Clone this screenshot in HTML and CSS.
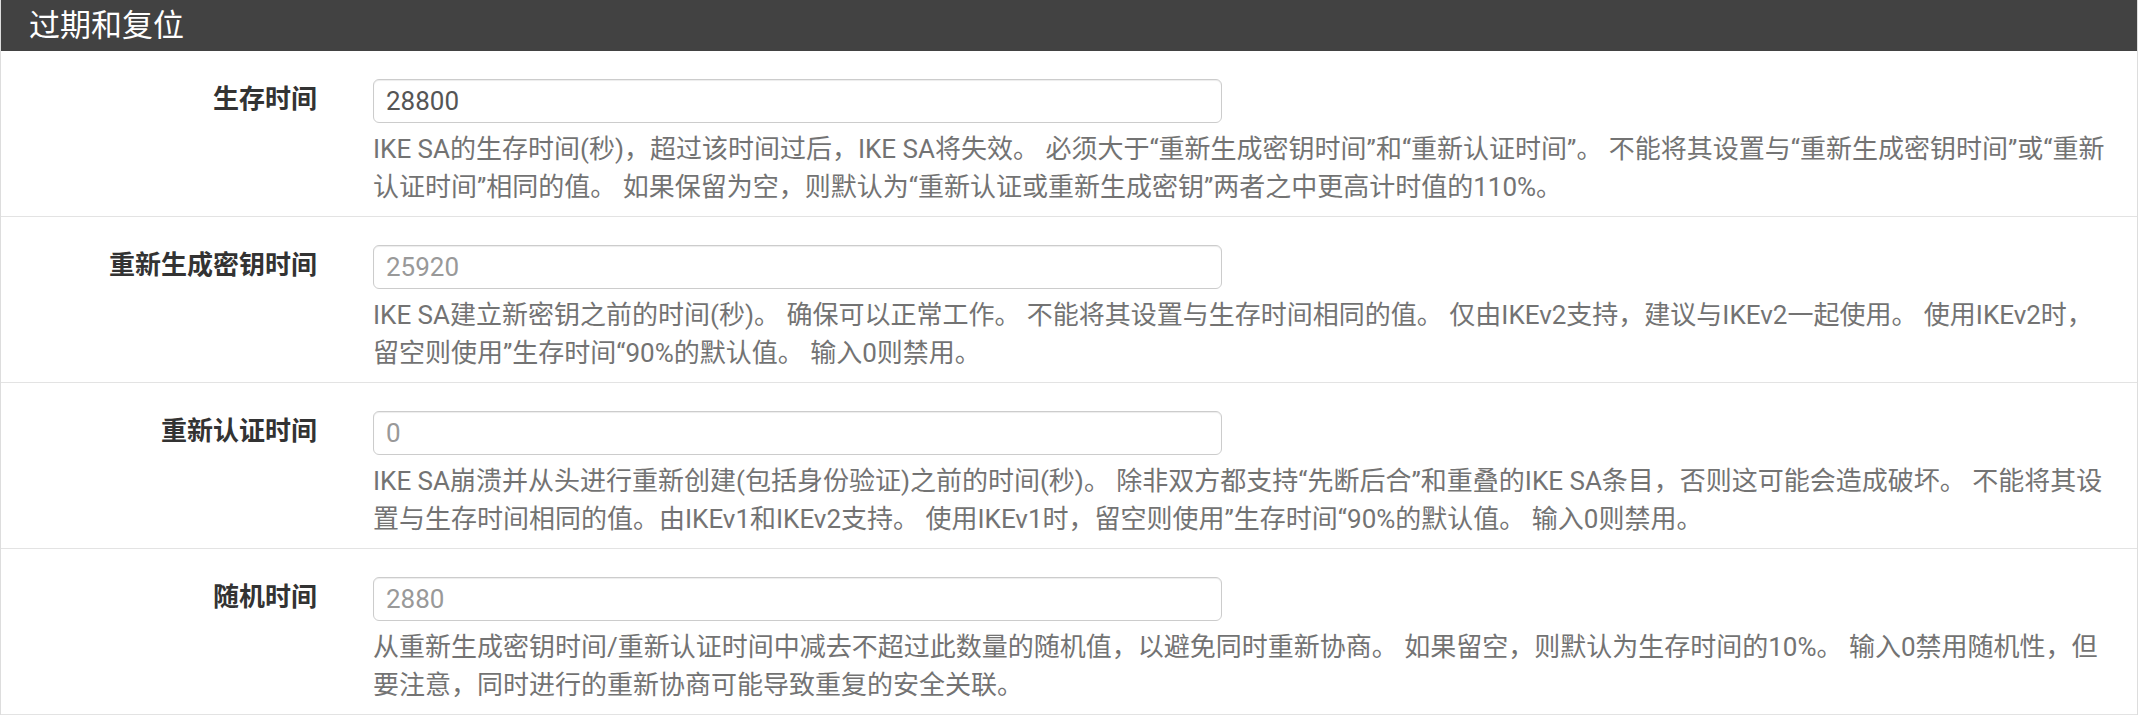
FILE: index.html
```html
<!DOCTYPE html>
<html lang="zh-CN">
<head>
<meta charset="utf-8">
<title>过期和复位</title>
<link rel="stylesheet" href="styles.css">
</head>
<body>
<div class="panel">
  <div class="panel-heading"><h2 class="panel-title">过期和复位</h2></div>
  <div class="panel-body">
    <div class="form-group">
      <label class="control-label">生存时间</label>
      <div class="field">
        <input class="form-control" type="text" value="28800">
        <span class="help-block">IKE SA的生存时间(秒)，超过该时间过后，IKE SA将失效。 必须大于“重新生成密钥时间”和“重新认证时间”。 不能将其设置与“重新生成密钥时间”或“重新认证时间”相同的值。 如果保留为空，则默认为“重新认证或重新生成密钥”两者之中更高计时值的110%。</span>
      </div>
    </div>
    <div class="form-group">
      <label class="control-label">重新生成密钥时间</label>
      <div class="field">
        <input class="form-control" type="text" placeholder="25920">
        <span class="help-block">IKE SA建立新密钥之前的时间(秒)。 确保可以正常工作。 不能将其设置与生存时间相同的值。 仅由IKEv2支持，建议与IKEv2一起使用。 使用IKEv2时，留空则使用”生存时间“90%的默认值。 输入0则禁用。</span>
      </div>
    </div>
    <div class="form-group">
      <label class="control-label">重新认证时间</label>
      <div class="field">
        <input class="form-control" type="text" placeholder="0">
        <span class="help-block">IKE SA崩溃并从头进行重新创建(包括身份验证)之前的时间(秒)。 除非双方都支持“先断后合”和重叠的IKE SA条目，否则这可能会造成破坏。 不能将其设置与生存时间相同的值。由IKEv1和IKEv2支持。 使用IKEv1时，留空则使用”生存时间“90%的默认值。 输入0则禁用。</span>
      </div>
    </div>
    <div class="form-group">
      <label class="control-label">随机时间</label>
      <div class="field">
        <input class="form-control" type="text" placeholder="2880">
        <span class="help-block">从重新生成密钥时间/重新认证时间中减去不超过此数量的随机值，以避免同时重新协商。 如果留空，则默认为生存时间的10%。 输入0禁用随机性，但要注意，同时进行的重新协商可能导致重复的安全关联。</span>
      </div>
    </div>
  </div>
</div>
</body>
</html>
```
FILE: styles.css
```css
* {
  box-sizing: border-box;
}

html,
body {
  margin: 0;
  background: #fff;
}

body {
  font-family: Roboto, "Noto Sans CJK SC", sans-serif;
  color: #333;
}

.panel {
  margin-right: 1px;
  border-left: 1px solid #ddd;
  border-right: 1px solid #ddd;
}

.panel-heading {
  height: 51px;
  padding: 0 28px;
  display: flex;
  align-items: center;
  background: #424242;
}

.panel-title {
  margin: 0;
  font-size: 31px;
  font-weight: 400;
  line-height: 1;
  color: #fff;
}

.form-group {
  display: grid;
  grid-template-columns: 316px 1fr;
  column-gap: 56px;
  padding: 28px 20px 10px 0;
  border-bottom: 1px solid #e3e3e3;
}

.control-label {
  text-align: right;
  font-size: 26px;
  font-weight: 700;
  line-height: 40px;
  color: #333;
}

.form-control {
  display: block;
  width: 849px;
  height: 44px;
  padding: 0 12px;
  font-family: inherit;
  font-size: 26px;
  color: #555;
  background: #fff;
  border: 1px solid #ccc;
  border-radius: 6px;
  box-shadow: inset 0 1px 1px rgba(0, 0, 0, 0.075);
  outline: none;
}

.form-control::placeholder {
  color: #999;
}

.help-block {
  display: block;
  margin-top: 7px;
  font-size: 26px;
  line-height: 38px;
  color: #737373;
}
```
